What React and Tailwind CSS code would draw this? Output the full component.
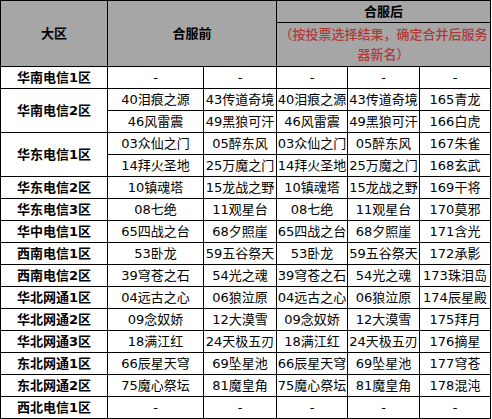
import React from "react";

const rows = [
  { region: "华南电信1区", items: [["-", "-", "-", "-", "-"]] },
  {
    region: "华南电信2区",
    items: [
      ["40泪痕之源", "43传道奇境", "40泪痕之源", "43传道奇境", "165青龙"],
      ["46风雷震", "49黑狼可汗", "46风雷震", "49黑狼可汗", "166白虎"],
    ],
  },
  {
    region: "华东电信1区",
    items: [
      ["03众仙之门", "05醉东风", "03众仙之门", "05醉东风", "167朱雀"],
      ["14拜火圣地", "25万魔之门", "14拜火圣地", "25万魔之门", "168玄武"],
    ],
  },
  { region: "华东电信2区", items: [["10镇魂塔", "15龙战之野", "10镇魂塔", "15龙战之野", "169干将"]] },
  { region: "华东电信3区", items: [["08七绝", "11观星台", "08七绝", "11观星台", "170莫邪"]] },
  { region: "华中电信1区", items: [["65四战之台", "68夕照崖", "65四战之台", "68夕照崖", "171含光"]] },
  { region: "西南电信1区", items: [["53卧龙", "59五谷祭天", "53卧龙", "59五谷祭天", "172承影"]] },
  { region: "西南电信2区", items: [["39穹苍之石", "54光之魂", "39穹苍之石", "54光之魂", "173珠泪岛"]] },
  { region: "华北网通1区", items: [["04远古之心", "06狼泣原", "04远古之心", "06狼泣原", "174辰星殿"]] },
  { region: "华北网通2区", items: [["09念奴娇", "12大漠雪", "09念奴娇", "12大漠雪", "175拜月"]] },
  { region: "华北网通3区", items: [["18满江红", "24天极五刃", "18满江红", "24天极五刃", "176摘星"]] },
  { region: "东北网通1区", items: [["66辰星天穹", "69坠星池", "66辰星天穹", "69坠星池", "177穹苍"]] },
  { region: "东北网通2区", items: [["75魔心祭坛", "81魔皇角", "75魔心祭坛", "81魔皇角", "178混沌"]] },
  { region: "西北电信1区", items: [["-", "-", "-", "-", "-"]] },
];

const cell =
  "bg-white flex items-center justify-center whitespace-nowrap overflow-hidden text-[13px] leading-[20px] text-black";

export default function App() {
  return (
    <div
      className="w-[492px] h-[419px] bg-white"
      style={{ fontFamily: '"DejaVu Sans", "Noto Sans CJK SC", sans-serif' }}
    >
      <div className="grid w-[491px] bg-black p-px gap-px grid-cols-[106px_95px_72px_70px_71px_70px] grid-rows-[21px_43px_repeat(16,21px)]">
        <div className="row-span-2 bg-[#a6a6a6] flex items-center justify-center text-[13px] font-bold text-black">
          大区
        </div>
        <div className="row-span-2 col-span-2 bg-[#a6a6a6] flex items-center justify-center text-[13px] font-bold text-black">
          合服前
        </div>
        <div className="col-span-3 bg-[#a6a6a6] flex items-center justify-center text-[13px] font-bold text-black">
          合服后
        </div>
        <div className="col-span-3 bg-[#a6a6a6] flex items-center justify-center text-center text-[13px] leading-[20px] font-medium text-[#b03a38] px-[2px]">
          （按投票选择结果，确定合并后服务器新名）
        </div>
        {rows.map((r) => (
          <React.Fragment key={r.region}>
            <div
              className={
                (r.items.length === 2 ? "row-span-2 " : "") +
                "bg-white flex items-center justify-center whitespace-nowrap text-[13px] font-bold text-black"
              }
            >
              {r.region}
            </div>
            {r.items.map((it, i) =>
              it.map((t, j) => (
                <div key={i + "-" + j} className={cell}>
                  {t}
                </div>
              ))
            )}
          </React.Fragment>
        ))}
      </div>
    </div>
  );
}
